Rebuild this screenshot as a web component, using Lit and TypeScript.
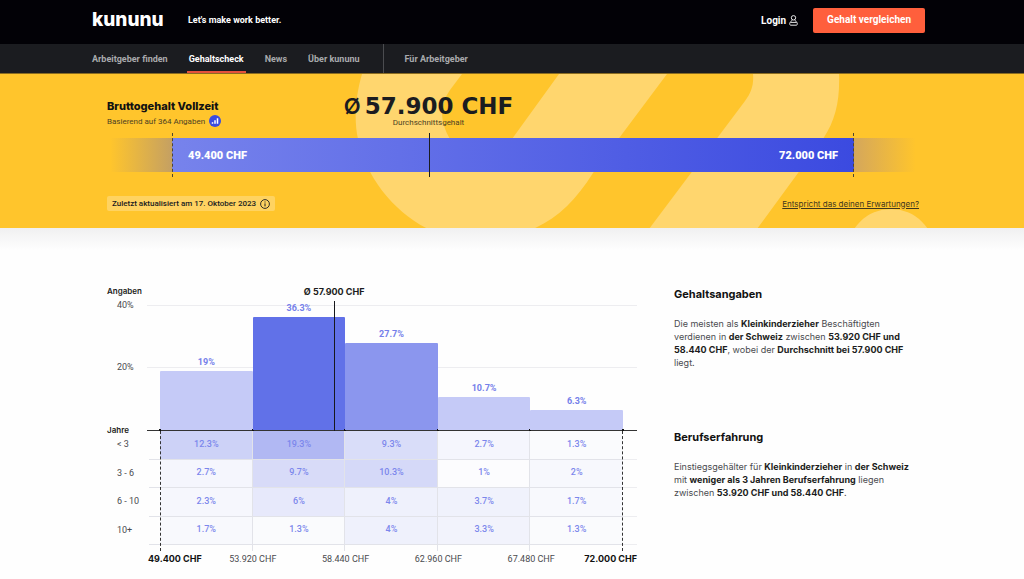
import { LitElement, html, svg, css } from "lit";
import { customElement, property } from "lit/decorators.js";

const BINS = [
  { share: 19, tone: "light" },
  { share: 36.3, tone: "strong" },
  { share: 27.7, tone: "medium" },
  { share: 10.7, tone: "light" },
  { share: 6.3, tone: "light" },
];

const EXPERIENCE = [
  { label: "< 3", values: [12.3, 19.3, 9.3, 2.7, 1.3] },
  { label: "3 - 6", values: [2.7, 9.7, 10.3, 1, 2] },
  { label: "6 - 10", values: [2.3, 6, 4, 3.7, 1.7] },
  { label: "10+", values: [1.7, 1.3, 4, 3.3, 1.3] },
];

const TICKS = ["49.400", "53.920", "58.440", "62.960", "67.480", "72.000"];

const AVERAGE_POSITION = ((57900 - 49400) / (72000 - 49400)) * 100;

@customElement("site-header")
class SiteHeader extends LitElement {
  static styles = css`
    :host { display: block; color: #fff; font-family: Roboto, "Liberation Sans", sans-serif; }
    .top {
      display: flex; align-items: center; height: 44px;
      padding: 0 99px 0 92px; background: #020106;
      box-sizing: border-box;
    }
    .logo {
      color: #fff; text-decoration: none; font-family: Inter, sans-serif; font-size: 19px; line-height: 24px;
      font-weight: 800; width: 96px; padding-bottom: 4px; box-sizing: border-box;
    }
    .claim { font-size: 9px; font-weight: 700; line-height: 12px; padding-bottom: 4px; }
    .actions { margin-left: auto; display: flex; align-items: center; gap: 15px; padding-bottom: 4px; }
    .login {
      display: flex; align-items: center; gap: 3px; color: #fff;
      font-size: 10px; font-weight: 700; text-decoration: none;
    }
    .compare {
      font: inherit; font-size: 10px; font-weight: 700; color: #fff; line-height: 12px;
      background: #ff5f3c; border: 0; border-radius: 2px; padding: 6px 14px;
      height: 25px; white-space: nowrap; cursor: pointer;
    }
    .nav {
      display: flex; align-items: stretch; height: 30px; background: #1b1c20;
      padding: 0 99px 0 92px; border-bottom: 1px solid #8a6c22; box-sizing: border-box;
    }
    .link {
      display: flex; align-items: center; color: #a9aaad; text-decoration: none;
      font-size: 9px; font-weight: 700; margin-right: 17px; white-space: nowrap;
      border-bottom: 2px solid transparent; border-top: 2px solid transparent; padding: 0 2px;
    }
    .link:first-child { padding-left: 0; }
    .active { color: #fff; border-bottom-color: #e5513b; }
    .employer { border-left: 1px solid #4b4c50; padding-left: 21px; margin-left: 4px; display: flex; }
  `;

  render() {
    return html`
      <header>
        <div class="top">
          <a class="logo" href="#">kununu</a>
          <span class="claim">Let's make work better.</span>
          <div class="actions">
            <a class="login" href="#">Login
              <svg width="9" height="11" viewBox="0 0 9 11" fill="none" stroke="#fff" stroke-width="0.9">
                <circle cx="4.5" cy="2.8" r="2.2"></circle>
                <path d="M3.1 4.7C2.9 6.4 0.9 6.7 0.7 8.6C0.6 9.7 1 10.2 2 10.2H7C8 10.2 8.4 9.7 8.3 8.6C8.1 6.7 6.1 6.4 5.9 4.7"></path>
                <path d="M1.4 7.4H7.6"></path>
              </svg>
            </a>
            <button class="compare">Gehalt vergleichen</button>
          </div>
        </div>
        <nav class="nav">
          <a class="link" href="#">Arbeitgeber finden</a>
          <a class="link active" href="#" aria-current="page">Gehaltscheck</a>
          <a class="link" href="#">News</a>
          <a class="link" href="#">Über kununu</a>
          <span class="employer"><a class="link" href="#">Für Arbeitgeber</a></span>
        </nav>
      </header>
    `;
  }
}

@customElement("salary-hero")
class SalaryHero extends LitElement {
  static styles = css`
    :host {
      display: block; position: relative; background: #ffc52c; color: #1b1c20; overflow: hidden;
      font-family: Roboto, "Liberation Sans", sans-serif;
    }
    .pattern { position: absolute; inset: 0; width: 100%; height: 100%; }
    .content { position: relative; padding: 25px 105px 17px 107px; }
    .title { margin: 0; font-family: Inter, sans-serif; font-size: 11px; line-height: 14px; font-weight: 800; color: #121212; }
    .basis { display: flex; align-items: center; gap: 4px; height: 12px; margin: 2px 0 11px; font-size: 8px; color: #4d4223; }
    .range { display: flex; height: 34px; }
    .fade { width: 65px; }
    .before { background: linear-gradient(90deg, rgba(119, 131, 160, 0) 5%, rgba(125, 115, 165, 0.45)); }
    .after { background: linear-gradient(90deg, rgba(160, 130, 150, 0.45), rgba(160, 130, 150, 0) 95%); }
    .track {
      flex: 1; position: relative; display: flex; justify-content: space-between; align-items: center;
      padding: 0 16px; color: #fff; font-size: 11px; font-weight: 900;
      background: linear-gradient(90deg, #7783ec, #3b4ae0);
    }
    .track::before, .track::after {
      content: ""; position: absolute; top: -5px; bottom: -5px; border-left: 1px dashed #4f4630;
    }
    .track::before { left: 0; }
    .track::after { right: 0; }
    .marker { position: absolute; top: -5px; bottom: -5px; width: 1px; background: #1b1c20; }
    .average {
      position: absolute; bottom: 44px; transform: translateX(-50%); text-align: center;
      white-space: nowrap; color: #1b1c20;
    }
    .amount {
      display: flex; gap: 4px; justify-content: center; line-height: 24px;
      font-family: "DejaVu Sans", sans-serif; font-size: 23px; font-weight: 700;
    }
    .sign { font-family: Inter, sans-serif; font-size: 22px; font-weight: 600; }
    .caption { font-size: 8px; line-height: 10px; font-weight: 400; color: #4d4223; }
    .meta { display: flex; justify-content: space-between; align-items: center; margin-top: 24px; }
    .updated {
      display: flex; align-items: center; gap: 4px; height: 15px; padding: 0 5px; border-radius: 2px;
      background: rgba(255, 255, 255, 0.25); font-size: 8px; font-weight: 500;
    }
    .link { font-family: Inter, sans-serif; font-size: 8px; color: #3f371e; text-decoration: underline; }
  `;

  render() {
    return html`
      <svg class="pattern" viewBox="0 73 1024 155" preserveAspectRatio="xMidYMin slice" aria-hidden="true">
        ${svg`
          <path fill="#ffd66e" fill-rule="evenodd" d="M362 73C355 97 354 120 358 138C366 176 393 210 428 228H533C558 217 576 199 593 172L667 73H559L512 138C496 160 462 160 450 138C440 121 439 105 450 89L462 73Z"/>
          <path fill="#ffd66e" d="M753 73C754 84 751 92 745 100L649 228H757L798 172L823 138C836 119 840 98 839 73Z"/>
          <circle fill="#ffd66e" cx="891" cy="252" r="44"/>
        `}
      </svg>
      <section class="content">
        <h1 class="title">Bruttogehalt Vollzeit</h1>
        <p class="basis">Basierend auf 364 Angaben
          <svg width="12" height="12" viewBox="0 0 12 12" aria-hidden="true">
            <circle cx="6" cy="6" r="6" fill="#3b4ae0"></circle>
            <path d="M3.5 8.8V7.2M6 8.8V5.2M8.5 8.8V3.2" stroke="#fff" stroke-width="1.5"></path>
          </svg>
        </p>
        <div class="range">
          <span class="fade before"></span>
          <div class="track">
            <span>49.400 CHF</span>
            <span>72.000 CHF</span>
            <span class="marker" style="left:${AVERAGE_POSITION}%"></span>
            <div class="average" style="left:${AVERAGE_POSITION}%">
              <div class="amount"><span class="sign">Ø</span><span>57.900 CHF</span></div>
              <div class="caption">Durchschnittsgehalt</div>
            </div>
          </div>
          <span class="fade after"></span>
        </div>
        <div class="meta">
          <span class="updated">Zuletzt aktualisiert am 17. Oktober 2023
            <svg width="10" height="10" viewBox="0 0 10 10" fill="none" stroke="#1b1c20" aria-hidden="true">
              <circle cx="5" cy="5" r="4.4" stroke-width="0.9"></circle>
              <path d="M5 4.4V7.4M5 2.5V3.5" stroke-width="1"></path>
            </svg>
          </span>
          <a class="link" href="#">Entspricht das deinen Erwartungen?</a>
        </div>
      </section>
    `;
  }
}

@customElement("salary-chart")
class SalaryChart extends LitElement {
  @property({ type: Number }) max = 40;

  static styles = css`
    :host { display: block; color: #1b1c20; font-size: 9px; font-family: Roboto, "Liberation Sans", sans-serif; }
    .axis-title { display: block; font-family: Inter, sans-serif; font-size: 8px; line-height: 10px; font-weight: 600; }
    .upper { display: grid; grid-template-columns: 40px 1fr; margin-top: 9px; }
    .scale { display: grid; grid-template-rows: 62px 58px 10px; height: 126px; }
    .step { line-height: 12px; margin-top: -6px; padding-left: 10px; font-size: 9px; color: #4a4b4f; }
    .years { white-space: nowrap; }
    .plot {
      position: relative; height: 126px; padding: 0 14px 0 13px; box-sizing: border-box;
      border-bottom: 1px solid #333;
      background:
        linear-gradient(#ededf0, #ededf0) 0 0 / 100% 1px no-repeat,
        linear-gradient(#ededf0, #ededf0) 0 62px / 100% 1px no-repeat;
    }
    .bars { position: relative; display: grid; grid-template-columns: repeat(5, 1fr); height: 100%; }
    .bin { display: flex; flex-direction: column; justify-content: flex-end; position: relative; height: 100%; }
    .share { text-align: center; line-height: 12px; padding-bottom: 3px; font-size: 9px; font-weight: 700; color: #7580ea; }
    .bar { flex-shrink: 0; border-radius: 1px 1px 0 0; }
    .light { background: #c5caf7; }
    .medium { background: #8b96ee; }
    .strong { background: #6171e8; }
    .bin::after, .bin:first-child::before {
      content: ""; position: absolute; bottom: -1px; width: 2px; height: 2px; background: #111;
    }
    .bin::after { right: -1px; }
    .bin:first-child::before { left: -1px; }
    .marker { position: absolute; top: -4px; bottom: -1px; width: 1px; background: #17181c; }
    .average {
      position: absolute; top: -19px; line-height: 12px; transform: translateX(-50%);
      font-family: Inter, sans-serif; font-size: 9px; font-weight: 700; white-space: nowrap;
    }
    .matrix { position: relative; padding-bottom: 6px; }
    .table { width: 100%; height: 114px; table-layout: fixed; border-collapse: separate; border-spacing: 0; }
    .row-label {
      width: 53px; box-sizing: border-box; padding: 0 0 2px 10px; text-align: left; font-weight: 400;
      color: #4a4b4f; background: linear-gradient(#e2e3e9, #e2e3e9) right bottom / 11px 1px no-repeat;
    }
    .cell {
      padding: 0 0 2px; text-align: center; font-weight: 500; color: #7c87ec;
      border-bottom: 1px solid #e2e3e9;
    }
    .tail { width: 14px; padding: 0; border-bottom: 1px solid #ededf0; }
    .rules { position: absolute; inset: 0 14px 0 53px; display: grid; grid-template-columns: repeat(5, 1fr); }
    .rule { border-right: 1px solid #e2e3e9; }
    .rule:first-child { border-left: 1px dashed #333; }
    .rule:last-child { border-right: 1px dashed #333; }
    .ticks {
      display: grid; grid-template-columns: 12px repeat(10, 1fr) 13px; margin-left: 41px; padding-top: 2px;
      line-height: 12px; text-align: center; color: #4a4b4f; white-space: nowrap;
    }
    .tick { grid-column: span 2; }
    .tick:first-child { text-align: left; }
    .tick:last-child { display: flex; justify-content: flex-end; }
    .tick:first-child, .tick:last-child { font-family: Inter, sans-serif; font-weight: 700; color: #111; }
  `;

  render() {
    return html`
      <span class="axis-title">Angaben</span>
      <div class="upper">
        <div class="scale">
          <span class="step">40%</span>
          <span class="step">20%</span>
          <span class="axis-title years">Jahre</span>
        </div>
        <div class="plot">
          <div class="bars">
            ${BINS.map(
              (bin) => html`
                <div class="bin">
                  <span class="share">${bin.share}%</span>
                  <div class="bar ${bin.tone}" style="height:${(bin.share / this.max) * 100}%"></div>
                </div>
              `
            )}
            <span class="marker" style="left:${AVERAGE_POSITION}%"></span>
            <span class="average" style="left:${AVERAGE_POSITION}%">Ø 57.900 CHF</span>
          </div>
        </div>
      </div>
      <div class="matrix">
        <table class="table" aria-label="Angaben nach Jahren">
          <tbody>
            ${EXPERIENCE.map(
              (row) => html`
                <tr>
                  <th class="row-label" scope="row">${row.label}</th>
                  ${row.values.map(
                    (value) => html`
                      <td class="cell" style="background-color:rgba(97,113,232,${Math.max(0, value - 0.4) * 0.026})">${value}%</td>
                    `
                  )}
                  <td class="tail"></td>
                </tr>
              `
            )}
          </tbody>
        </table>
        <div class="rules" aria-hidden="true">${BINS.map(() => html`<span class="rule"></span>`)}</div>
      </div>
      <div class="ticks">${TICKS.map((tick) => html`<span class="tick">${tick} CHF</span>`)}</div>
    `;
  }
}

@customElement("app-root")
class AppRoot extends LitElement {
  static styles = css`
    :host { display: block; min-height: 100vh; font-family: Inter, "Liberation Sans", sans-serif; background: #fefefe; }
    .main {
      display: grid; grid-template-columns: 530fr 245fr; gap: 37px; align-items: start;
      padding: 58px 105px 12px 107px;
      background: linear-gradient(#f0f0f1, #fefefe 22px);
    }
    .notes { color: #4a4b4f; font-size: 9px; line-height: 13px; }
    .heading { margin: 0; font-size: 11px; line-height: 16px; font-weight: 700; color: #111; }
    .text { margin: 15px 0 0; }
    .note + .note { margin-top: 60px; }
    .strong { font-weight: 700; color: #1b1c20; }
  `;

  render() {
    return html`
      <site-header></site-header>
      <salary-hero></salary-hero>
      <main class="main">
        <salary-chart></salary-chart>
        <aside class="notes">
          <section class="note">
            <h2 class="heading">Gehaltsangaben</h2>
            <p class="text">Die meisten als <b class="strong">Kleinkinderzieher</b> Beschäftigten verdienen in <b class="strong">der Schweiz</b> zwischen <b class="strong">53.920 CHF und 58.440 CHF</b>, wobei der <b class="strong">Durchschnitt bei 57.900 CHF</b> liegt.</p>
          </section>
          <section class="note">
            <h2 class="heading">Berufserfahrung</h2>
            <p class="text">Einstiegsgehälter für <b class="strong">Kleinkinderzieher</b> in <b class="strong">der Schweiz</b> mit <b class="strong">weniger als 3 Jahren Berufserfahrung</b> liegen zwischen <b class="strong">53.920 CHF und 58.440 CHF</b>.</p>
          </section>
        </aside>
      </main>
    `;
  }
}
